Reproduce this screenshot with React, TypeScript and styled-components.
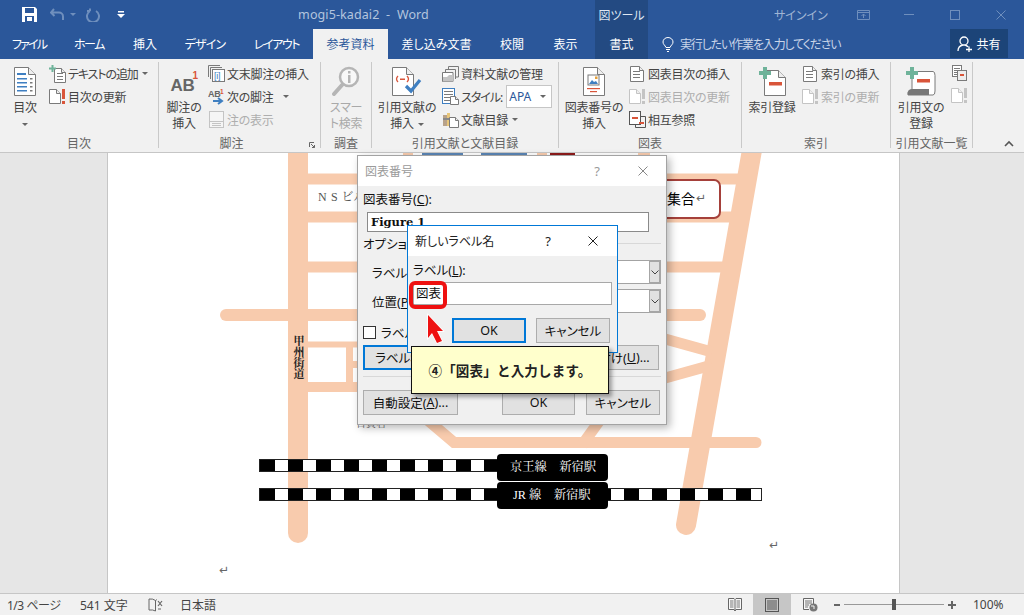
import React from "react";
import styled, { createGlobalStyle } from "styled-components";

const Global = createGlobalStyle`
  html, body { margin: 0; padding: 0; background: #fff; }
  body { font-family: "Noto Sans", "Noto Sans CJK JP", sans-serif; font-size: 12px; font-feature-settings: "palt"; }
  #root { width: 1024px; height: 615px; overflow: hidden; }
  * { box-sizing: border-box; }
`;

const Root = styled.div`position: relative; width: 1024px; height: 615px; overflow: hidden; display: flex; flex-direction: column;`;

/* ---------- title bar ---------- */
const TitleBar = styled.div`height: 29px; background: #2b579a; display: flex; align-items: center; position: relative; flex: none;`;
const Qat = styled.div`display: flex; align-items: center; width: 206px; padding-left: 21px;`;
const QatSlot = styled.div<{ $w: number; $ml?: number }>`width: ${p => p.$w}px; margin-left: ${p => p.$ml ?? 0}px; display: flex; align-items: center; justify-content: center;`;
const DocTitle = styled.div`width: 315px; margin-right: 74px; text-align: center; color: #b4c5de; font-size: 12.5px; white-space: pre; letter-spacing: .1px; font-family: "Noto Sans", sans-serif;`;
const ToolTitle = styled.div`width: 53px; height: 29px; background: #234a82; color: #dfe7f2; display: flex; align-items: center; justify-content: center; font-size: 12px;`;
const SignIn = styled.div`margin-left: 126px; width: 46px; color: #a0b5d4; font-size: 12px; white-space: nowrap;`;
const WinBtns = styled.div`display: flex; margin-left: 20px;`;
const WinBtn = styled.div`width: 46px; height: 29px; display: flex; align-items: center; justify-content: center;`;

/* ---------- tabs ---------- */
const TabBar = styled.div`height: 30px; background: #2b579a; display: flex; align-items: stretch; position: relative; flex: none;`;
const Tab = styled.div<{ $x: number; $active?: boolean; $tool?: boolean; $sp?: number }>`
  width: ${p => p.$x}px; display: flex; align-items: center; justify-content: center; white-space: nowrap;
  margin-left: ${p => (p.$tool ? 3 : 0)}px;
  letter-spacing: ${p => p.$sp ?? 0}px;
  color: ${p => (p.$active ? "#2b579a" : "#fff")};
  background: ${p => (p.$active ? "#f1f1f1" : p.$tool ? "#234a82" : "transparent")};
`;
const Tell = styled.div`display: flex; align-items: center; margin-left: 14px; width: 288px; gap: 6px; color: #c8d4e8; letter-spacing: -1.15px; white-space: nowrap;`;
const Share = styled.div`width: 58px; margin: 0 0 1px 0; background: #1c4478; color: #fff; display: flex; align-items: center; justify-content: center; gap: 3px;`;

/* ---------- ribbon ---------- */
const Ribbon = styled.div`height: 94px; background: #f1f1f1; border-bottom: 1px solid #c6c6c6; display: flex; position: relative; flex: none; color: #444; letter-spacing: -.25px;`;
const Group = styled.div<{ $w: number }>`width: ${p => p.$w}px; display: flex; flex-direction: column; flex: none;`;
const GroupBody = styled.div<{ $pl: number; $gap: number }>`height: 76px; display: flex; padding-left: ${p => p.$pl}px; gap: ${p => p.$gap}px;`;
const GroupLabel = styled.div<{ $pr?: number }>`height: 17px; line-height: 17px; text-align: center; color: #666; white-space: nowrap; position: relative; letter-spacing: 0; padding-right: ${p => p.$pr ?? 0}px;`;
const Launcher = styled.svg`position: absolute; right: 5px; top: 7px; width: 6px; height: 6px;`;
const Sep = styled.div`width: 1px; height: 86px; margin-top: 3px; background: #c9c9c9; flex: none;`;
const Big = styled.div<{ $w: number; $off?: boolean }>`width: ${p => p.$w}px; padding-top: 8px; display: flex; flex-direction: column; align-items: center; color: ${p => (p.$off ? "#a9a9a9" : "#444")}; flex: none;`;
const BigIcon = styled.div`height: 28px; margin-bottom: 5px; display: flex; align-items: center; justify-content: center;`;
const BigLine = styled.div`height: 16px; line-height: 16px; white-space: nowrap; display: flex; align-items: center; gap: 4px;`;
const SmallCol = styled.div<{ $top?: number }>`padding-top: ${p => p.$top ?? 3}px; display: flex; flex-direction: column;`;
const SmallRow = styled.div<{ $off?: boolean; $sp?: number }>`height: 23px; display: flex; align-items: center; white-space: nowrap; color: ${p => (p.$off ? "#aeaeae" : "#444")}; letter-spacing: ${p => p.$sp ?? -0.25}px;`;
const Slot = styled.div`width: 17px; margin-right: 2px; display: flex; align-items: center; justify-content: center; flex: none;`;
const Caret = styled.span<{ $ml?: number }>`display: inline-block; width: 0; height: 0; margin-left: ${p => p.$ml ?? 0}px; border: 3px solid transparent; border-top: 3.5px solid #666; border-bottom: 0;`;
const StyleSelect = styled.div`width: 46px; height: 23px; margin-left: 4px; background: #fff; border: 1px solid #c6c6c6; display: flex; align-items: center; justify-content: space-between; padding: 0 5px 0 2px; color: #2b579a; letter-spacing: 0;`;
const Collapse = styled.div`position: absolute; right: 10px; bottom: 4px; width: 10px; height: 8px;`;

/* ---------- document ---------- */
const DocArea = styled.div`flex: 1; background: #e6e6e6; padding-left: 107px; min-height: 0;`;
const Page = styled.div`position: relative; width: 793px; height: 100%; background: #fff; border-left: 1px solid #c6c6c6; border-right: 1px solid #c6c6c6; overflow: hidden;`;
const MapArt = styled.svg`position: absolute; left: 0; top: 0; width: 791px; height: 440px;`;
const MapLabel = styled.div<{ $x: number; $y: number; $c?: string; $s?: number; $b?: boolean; $ls?: number }>`
  position: absolute; left: ${p => p.$x - 108}px; top: ${p => p.$y - 153}px; white-space: pre; line-height: 1;
  font-family: "Liberation Serif", "Noto Serif CJK JP", "Noto Sans CJK JP", serif;
  color: ${p => p.$c ?? "#222"}; font-size: ${p => p.$s ?? 12}px; font-weight: ${p => (p.$b ? 700 : 400)}; letter-spacing: ${p => p.$ls ?? 0}px;
`;
const VerticalLabel = styled(MapLabel)`writing-mode: vertical-rl; font-feature-settings: normal;`;
const Callout = styled(MapLabel)`font-family: "Noto Sans CJK JP", sans-serif; color: #000;`;
const Para = styled.div<{ $x: number; $y: number }>`position: absolute; left: ${p => p.$x - 108}px; top: ${p => p.$y - 153}px; color: #666; font-size: 12px; line-height: 1; font-family: "DejaVu Sans", sans-serif;`;

/* ---------- dialogs ---------- */
const Dialog = styled.div`position: absolute; left: 357px; top: 155px; width: 310px; height: 270px; background: #f0f0f0; border: 1px solid #a3a3a3; box-shadow: 3px 3px 8px rgba(0,0,0,.28); color: #111; display: flex; flex-direction: column; font-size: 12.5px;`;
const DlgTitle = styled.div<{ $h: number; $c: string }>`height: ${p => p.$h}px; background: #fff; display: flex; align-items: center; padding-left: 7px; color: ${p => p.$c}; flex: none; font-size: 12px;`;
const DlgName = styled.div`flex: 1; white-space: nowrap;`;
const Help = styled.div<{ $c: string; $w: number }>`width: ${p => p.$w}px; text-align: center; color: ${p => p.$c}; font-size: 13px; font-family: "Noto Sans", sans-serif;`;
const CloseSlot = styled.div<{ $w: number }>`width: ${p => p.$w}px; display: flex; justify-content: center; align-items: center;`;
const DlgBody = styled.div`padding: 6px 5px 0 5px; display: flex; flex-direction: column;`;
const Lbl = styled.div`height: 16px; line-height: 16px; white-space: nowrap;`;
const CaptionInput = styled.div`margin: 4px 0 0 4px; width: 282px; height: 20px; background: #fff; border: 1px solid #8a8a8a; font: 700 11.5px/18px "DejaVu Serif", "Liberation Serif", serif; padding-left: 3px; color: #111;`;
const OptRow = styled.div`margin-top: 3px; height: 16px; display: flex; align-items: center; gap: 6px;`;
const Rule = styled.div`flex: 1; height: 1px; background: #d8d8d8;`;
const SelRow = styled.div<{ $mt: number }>`margin-top: ${p => p.$mt}px; height: 24px; display: flex; align-items: center; padding-left: 9px;`;
const SelName = styled.div`width: 48px; white-space: nowrap;`;
const SelField = styled.div`flex: 1; height: 24px; background: #fff; border: 1px solid #a3a3a3; display: flex; justify-content: flex-end;`;
const SelArrow = styled.div`width: 12px; margin: -1px -1px -1px 0; background: #e1e1e1; border: 2px solid #a6a6a6; border-left-width: 1px; display: flex; align-items: center; justify-content: center;`;
const CheckRow = styled.div`margin-top: 12px; height: 14px; display: flex; align-items: center; gap: 5px; white-space: nowrap;`;
const CheckBox = styled.div`width: 13px; height: 13px; background: #fff; border: 1px solid #333;`;
const BtnRow = styled.div<{ $mt: number }>`margin-top: ${p => p.$mt}px; display: flex;`;
const Btn = styled.div<{ $w: number; $h?: number; $primary?: boolean; $ml?: number }>`
  width: ${p => p.$w}px; height: ${p => p.$h ?? 25}px; margin-left: ${p => p.$ml ?? 0}px; flex: none;
  background: #e1e1e1; border: ${p => (p.$primary ? "2px solid #0078d7" : "1px solid #adadad")};
  display: flex; align-items: center; justify-content: center; white-space: nowrap; color: #111;
`;
const Divider = styled.div`margin-top: 6px; height: 1px; background: #d8d8d8;`;
const SubDialog = styled.div`position: absolute; left: 407px; top: 225px; width: 211px; height: 128px; background: #f0f0f0; border: 1px solid #0078d7; color: #111; display: flex; flex-direction: column; font-size: 12.5px;`;
const SubBody = styled.div`padding: 7px 6px 0 5px; display: flex; flex-direction: column;`;
const NameInput = styled.div`margin-top: 3px; width: 199px; height: 23px; background: #fff; border: 1px solid #a8a8a8; padding-left: 2px; line-height: 21px; font-size: 12.5px; color: #111;`;
const SubBtns = styled.div`margin-top: 13px; margin-left: 39px; display: flex; gap: 10px;`;
const Marker = styled.div`position: absolute; left: 409px; top: 281px; width: 38px; height: 28px; border: 4px solid #ee1111; border-radius: 6px;`;
const Pointer = styled.svg`position: absolute; left: 420px; top: 310px; width: 30px; height: 40px;`;
const Note = styled.div`position: absolute; left: 411px; top: 346px; width: 198px; height: 48px; background: #ffffcc; border: 1px solid #111; box-shadow: 3px 3px 4px rgba(0,0,0,.35); display: flex; align-items: center; justify-content: center; font-weight: 700; font-size: 13.5px; letter-spacing: .2px; color: #222; white-space: nowrap; font-feature-settings: normal;`;

/* ---------- status bar ---------- */
const Status = styled.div`height: 22px; flex: none; background: #f1f1f1; border-top: 1px solid #c6c6c6; display: flex; align-items: center; color: #444; font-size: 12px; position: relative;`;
const StatusText = styled.div<{ $w: number; $ml?: number; $sp?: number }>`width: ${p => p.$w}px; margin-left: ${p => p.$ml ?? 0}px; white-space: nowrap; flex: none; letter-spacing: ${p => p.$sp ?? 0}px;`;
const ViewBtn = styled.div<{ $w: number; $active?: boolean; $ml?: number }>`width: ${p => p.$w}px; height: 21px; margin-left: ${p => p.$ml ?? 0}px; display: flex; align-items: center; justify-content: center; background: ${p => (p.$active ? "#c6c6c6" : "transparent")}; flex: none;`;
const ZoomSign = styled.div`width: 6px; height: 2px; margin-left: 5px; background: #666; position: relative; flex: none;`;
const ZoomPlus = styled.div`width: 8px; height: 2px; background: #666; position: relative; flex: none; &::after { content: ""; position: absolute; left: 3px; top: -3px; width: 2px; height: 8px; background: #666; }`;
const Track = styled.div`width: 100px; height: 1px; background: #999; margin: 0 4px; position: relative; flex: none;`;
const Thumb = styled.div`position: absolute; left: 48px; top: -5px; width: 4px; height: 11px; background: #555;`;

/* ---------- icons ---------- */
const G = "#7a7a7a", R = "#d9553a", B = "#3f7fc1", GR = "#6fb39a", LT = "#c4c4c4";
const Svg = ({ w, h, children }: { w: number; h: number; children: React.ReactNode }) => (
  <svg width={w} height={h} viewBox={`0 0 ${w} ${h}`} style={{ display: "block" }}>{children}</svg>
);
const Sheet = ({ x = .5, y = .5, w, h, f = 6, c = G }: { x?: number; y?: number; w: number; h: number; f?: number; c?: string }) => (
  <>
    <path d={`M${x} ${y}H${x + w - f}L${x + w} ${y + f}V${y + h}H${x}Z`} fill="#fff" stroke={c} />
    <path d={`M${x + w - f} ${y}V${y + f}H${x + w}`} fill="#eee" stroke={c} />
  </>
);
const Plus = ({ x, y, s = 9, t = 3 }: { x: number; y: number; s?: number; t?: number }) => (
  <path d={`M${x + (s - t) / 2} ${y}h${t}v${(s - t) / 2}h${(s - t) / 2}v${t}h-${(s - t) / 2}v${(s - t) / 2}h-${t}v-${(s - t) / 2}h-${(s - t) / 2}v-${t}h${(s - t) / 2}Z`} fill={GR} />
);
const Bang = ({ x, c = R }: { x: number; c?: string }) => (
  <><rect x={x} y={1} width={3} height={10} fill={c} /><rect x={x} y={13} width={3} height={3} fill={c} /></>
);
const TocIcon = () => (
  <Svg w={22} h={29}>
    <Sheet w={21} h={28} f={7} />
    <rect x={3} y={6} width={9} height={2} fill={B} />
    {[11, 15, 19, 23].map(y => <g key={y}><rect x={3} y={y} width={10} height={1.5} fill={B} /><rect x={16} y={y} width={2.5} height={1.5} fill={G} /></g>)}
  </Svg>
);
const AddTextIcon = () => (
  <Svg w={17} h={18}>
    <Sheet x={5.5} y={3.5} w={11} h={14} f={4} />
    {[8, 11, 14].map(y => <rect key={y} x={8} y={y} width={6} height={1} fill={G} />)}
    <Plus x={0} y={0} s={7} t={2} />
  </Svg>
);
const UpdateIcon = ({ c = G, bang = R }: { c?: string; bang?: string }) => (
  <Svg w={17} h={17}><Sheet y={1.5} w={11} h={14} f={4} c={c} /><Bang x={13} c={bang} /></Svg>
);
const FootIcon = () => (
  <Svg w={32} h={28}>
    <text x={2.500} y={24} fontFamily="Liberation Sans" fontWeight={700} fontSize={17} fill="#666">AB</text>
    <text x={24.500} y={12} fontFamily="Liberation Sans" fontWeight={700} fontSize={10} fill={R}>1</text>
  </Svg>
);
const EndIcon = () => (
  <Svg w={17} h={17}>
    <path d="M.5 12V.5H12M2.5 14V2.5H14" fill="none" stroke={G} />
    <rect x={4.5} y={4.5} width={12} height={12} fill="#fff" stroke={G} />
    <text x={6} y={14} fontFamily="Liberation Sans" fontSize={9} fill={B}>[i]</text>
  </Svg>
);
const NextIcon = () => (
  <Svg w={17} h={17}>
    <text x={0} y={9} fontFamily="Liberation Sans" fontWeight={700} fontSize={9} fill="#666">AB</text>
    <text x={12} y={6} fontFamily="Liberation Sans" fontWeight={700} fontSize={6.5} fill={R}>1</text>
    <path d="M5 13h8M10 10l4 3-4 3" fill="none" stroke={B} strokeWidth={2} />
  </Svg>
);
const ShowIcon = () => (
  <Svg w={17} h={17}>
    <rect x={1.5} y={.5} width={14} height={16} fill="#f5f5f5" stroke={LT} />
    <rect x={2} y={10} width={13} height={1} fill={LT} /><rect x={4} y={12} width={9} height={1} fill={LT} /><rect x={4} y={14} width={9} height={1} fill={LT} />
  </Svg>
);
const LensIcon = () => (
  <Svg w={28} h={30}>
    <circle cx={17} cy={11} r={9} fill="#f8f8f8" stroke="#b5b5b5" strokeWidth={2.5} />
    <path d="M10 19L2 28" stroke="#b5b5b5" strokeWidth={4} strokeLinecap="round" />
    <rect x={16} y={5} width={2.5} height={2.5} fill="#b5b5b5" /><rect x={16} y={9} width={2.5} height={8} fill="#b5b5b5" />
  </Svg>
);
const CiteIcon = () => (
  <Svg w={30} h={29}>
    <Sheet w={21} h={28} f={7} />
    <path d="M6 9q-3 3 0 6M15 9q3 3 0 6" fill="none" stroke={R} strokeWidth={1.3} />
    <rect x={8} y={11.5} width={5} height={1.5} fill={R} />
    <path d="M14 19l5 5L28 13" fill="none" stroke={B} strokeWidth={3.2} />
  </Svg>
);
const ManageIcon = () => (
  <Svg w={17} h={16}>
    <path d="M6.5 3V.5H16.5V11H14M3.5 6V3.5H13.5V13" fill="none" stroke={G} />
    <path d="M.5 6.5H11L11 15.5H.5Z" fill="#fff" stroke={G} />
    <path d="M1 11h4l2-2h4V15.5H1Z" fill={LT} />
  </Svg>
);
const StyleIcon = () => (
  <Svg w={17} h={17}>
    <rect x={.5} y={.5} width={12} height={15} fill="#fff" stroke={B} />
    {[3, 6, 9, 12].map(y => <rect key={y} x={2} y={y} width={9} height={1} fill={G} />)}
    <Sheet x={8.5} y={8.5} w={8} h={8} f={3} />
  </Svg>
);
const BiblioIcon = () => (
  <Svg w={17} h={17}>
    <rect x={1} y={4} width={4} height={11} fill="#b8a28a" /><rect x={5} y={2} width={3} height={13} fill="#e8c67a" />
    <rect x={1} y={7} width={7} height={2} fill="#888" />
    <Sheet x={7.5} y={6.5} w={9} h={10} f={3} />
  </Svg>
);
const CaptionIcon = () => (
  <Svg w={22} h={29}>
    <Sheet w={21} h={28} f={7} />
    <rect x={5} y={8} width={11} height={10} fill="#fff" stroke={G} />
    <path d="M6 17l3-4 2 2 2-1 2 3Z" fill={B} /><rect x={12} y={9.5} width={2.5} height={2.5} fill="#e6a13a" />
    <rect x={4} y={21} width={13} height={1.2} fill={R} /><rect x={7} y={24} width={7} height={1.2} fill={R} />
  </Svg>
);
const ListDocIcon = () => (
  <Svg w={15} h={16}>
    <Sheet w={13} h={15} f={4} />
    {[5, 8, 11].map(y => <rect key={y} x={3} y={y} width={7} height={1} fill={G} />)}
  </Svg>
);
const XrefIcon = () => (
  <Svg w={17} h={17}>
    <rect x={.5} y={.5} width={11} height={13} fill="#fff" stroke="#555" />
    <rect x={3} y={6} width={6} height={2} fill={R} />
    <path d="M12 5.5h4.500V16.500H6.500V14" fill="none" stroke="#555" />
    <rect x={10} y={11} width={5} height={2} fill={R} />
  </Svg>
);
const EntryIcon = () => (
  <Svg w={27} h={29}>
    <Sheet x={5.500} y={3.500} w={21} h={25} f={7} />
    <rect x={10} y={15} width={13} height={3.5} fill={R} />
    <Plus x={0} y={0} s={12} t={4} />
  </Svg>
);
const MarkIcon = () => (
  <Svg w={31} h={29}>
    <path d="M6 4.500H27q2 0 2 4V24q0 4 -2 4H2q-1-5 4-5Z" fill="#fff" stroke={G} />
    <path d="M2 28q-1-6 4-6H23v6Z" fill="#777" />
    <rect x={11} y={12} width={13} height={3.500} fill={R} />
    <Plus x={0} y={0} s={12} t={4} />
  </Svg>
);
const TableMiniIcon = () => (
  <Svg w={15} h={16}>
    <rect x={.5} y={.5} width={9} height={11} fill="#fff" stroke={G} />
    {[3, 5, 7, 9].map(y => <rect key={y} x={2} y={y} width={6} height={1} fill={G} />)}
    <rect x={5.500} y={5.500} width={9} height={10} fill="#eee" stroke={G} />
    <rect x={8} y={9} width={4} height={2} fill={R} />
  </Svg>
);
const X = ({ s, c, w = 1 }: { s: number; c: string; w?: number }) => (
  <svg width={s} height={s} viewBox={`0 0 ${s} ${s}`} style={{ display: "block" }}><path d={`M.5 .5L${s - .5} ${s - .5}M${s - .5} .5L.5 ${s - .5}`} stroke={c} strokeWidth={w} /></svg>
);
const Chevron = () => (
  <svg width={8} height={5} viewBox="0 0 8 5" style={{ display: "block" }}><path d="M.5 .5L4 4L7.500 .5" fill="none" stroke="#444" /></svg>
);

/* ---------- map ---------- */
const PEACH = "#f8cbad";
const Rail = ({ y, x2 }: { y: number; x2: number }) => {
  const cells: React.ReactNode[] = [];
  for (let x = 260, i = 0; x < x2; i++) {
    const w = i % 2 ? 13 : 15;
    cells.push(<rect key={x} x={x} y={y} width={Math.min(w, x2 - x)} height={11} fill={i % 2 ? "#fff" : "#000"} />);
    x += w;
  }
  return <g>{cells}<rect x={259.5} y={y - .5} width={x2 - 259} height={12} fill="none" stroke="#222" /></g>;
};
const Road = ({ d, w = 11, cap = "butt" }: { d: string; w?: number; cap?: "butt" | "round" }) => (
  <path d={d} fill="none" stroke={PEACH} strokeWidth={w} strokeLinecap={cap} />
);
const MapDrawing = () => (
  <MapArt viewBox="108 153 791 440">
    <Road d="M298 150V533" w={20} cap="round" />
    <Road d="M752 150L686 525" w={20} cap="round" />
    <Road d="M300 179H745" />
    <Road d="M300 217H738" />
    <Road d="M300 267H730" />
    <Road d="M226 315H700" w={12} cap="round" />
    <Road d="M300 344.500H357" w={6} />
    <Road d="M300 387H357" w={10} />
    <Road d="M349.500 344V388" w={7} />
    <Road d="M353 364.500H358" w={7} />
    <Road d="M640 332L712 352" />
    <Road d="M640 385L712 365" />
    <Road d="M404 400L454 442.500H756" cap="round" />
    <Road d="M582 445L600 420" />
    <rect x={403} y={153} width={10} height={2} fill={PEACH} />
    <rect x={422} y={153} width={41} height={2} fill="#5b86b5" />
    <rect x={481} y={153} width={46} height={2} fill="#5b86b5" />
    <rect x={537} y={153} width={10} height={2} fill={PEACH} />
    <rect x={550} y={153} width={25} height={2} fill="#8e1c1c" />
    <rect x={638} y={153} width={12} height={2} fill={PEACH} />
    <rect x={600} y={180} width={120} height={38} rx={6} fill="#fff" stroke="#a5403a" strokeWidth={2} />
    <Rail y={460} x2={498} />
    <Rail y={489} x2={761} />
    <rect x={497} y={454} width={111} height={27} rx={4} fill="#000" />
    <rect x={497} y={482} width={111} height={27} rx={4} fill="#000" />
  </MapArt>
);

const RibbonDoc = () => (
  <Ribbon>
    <Group $w={158}>
      <GroupBody $pl={6} $gap={5}>
        <Big $w={38}><BigIcon><TocIcon /></BigIcon><BigLine>目次</BigLine><BigLine><Caret /></BigLine></Big>
        <SmallCol>
          <SmallRow $sp={-1.1}><Slot><AddTextIcon /></Slot>テキストの追加<Caret $ml={4} /></SmallRow>
          <SmallRow><Slot><UpdateIcon /></Slot>目次の更新</SmallRow>
        </SmallCol>
      </GroupBody>
      <GroupLabel>目次</GroupLabel>
    </Group>
    <Sep />
    <Group $w={161}>
      <GroupBody $pl={7} $gap={6}>
        <Big $w={36}><BigIcon><FootIcon /></BigIcon><BigLine>脚注の</BigLine><BigLine>挿入</BigLine></Big>
        <SmallCol>
          <SmallRow><Slot><EndIcon /></Slot>文末脚注の挿入</SmallRow>
          <SmallRow><Slot><NextIcon /></Slot>次の脚注<Caret $ml={9} /></SmallRow>
          <SmallRow $off><Slot><ShowIcon /></Slot>注の表示</SmallRow>
        </SmallCol>
      </GroupBody>
      <GroupLabel $pr={16}>
        脚注
        <Launcher viewBox="0 0 6 6"><path d="M.5 5V.5H5M2 2L5.500 5.500M5.500 3V5.500H3" fill="none" stroke="#666" /></Launcher>
      </GroupLabel>
    </Group>
    <Sep />
    <Group $w={50}>
      <GroupBody $pl={5} $gap={0}>
        <Big $w={40} $off><BigIcon><LensIcon /></BigIcon><BigLine>スマー</BigLine><BigLine>ト検索</BigLine></Big>
      </GroupBody>
      <GroupLabel>調査</GroupLabel>
    </Group>
    <Sep />
    <Group $w={186}>
      <GroupBody $pl={4} $gap={4}>
        <Big $w={62}><BigIcon><CiteIcon /></BigIcon><BigLine>引用文献の</BigLine><BigLine>挿入<Caret /></BigLine></Big>
        <SmallCol>
          <SmallRow><Slot><ManageIcon /></Slot>資料文献の管理</SmallRow>
          <SmallRow $sp={-1}><Slot><StyleIcon /></Slot>スタイル:<StyleSelect>APA<Caret /></StyleSelect></SmallRow>
          <SmallRow><Slot><BiblioIcon /></Slot>文献目録<Caret $ml={4} /></SmallRow>
        </SmallCol>
      </GroupBody>
      <GroupLabel>引用文献と文献目録</GroupLabel>
    </Group>
    <Sep />
    <Group $w={182}>
      <GroupBody $pl={4} $gap={4}>
        <Big $w={62}><BigIcon><CaptionIcon /></BigIcon><BigLine>図表番号の</BigLine><BigLine>挿入</BigLine></Big>
        <SmallCol>
          <SmallRow><Slot><ListDocIcon /></Slot>図表目次の挿入</SmallRow>
          <SmallRow $off><Slot><UpdateIcon c={LT} bang={LT} /></Slot>図表目次の更新</SmallRow>
          <SmallRow><Slot><XrefIcon /></Slot>相互参照</SmallRow>
        </SmallCol>
      </GroupBody>
      <GroupLabel>図表</GroupLabel>
    </Group>
    <Sep />
    <Group $w={148}>
      <GroupBody $pl={4} $gap={4}>
        <Big $w={52}><BigIcon><EntryIcon /></BigIcon><BigLine>索引登録</BigLine></Big>
        <SmallCol>
          <SmallRow><Slot><ListDocIcon /></Slot>索引の挿入</SmallRow>
          <SmallRow $off><Slot><UpdateIcon c={LT} bang={LT} /></Slot>索引の更新</SmallRow>
        </SmallCol>
      </GroupBody>
      <GroupLabel>索引</GroupLabel>
    </Group>
    <Sep />
    <Group $w={81}>
      <GroupBody $pl={5} $gap={5}>
        <Big $w={50}><BigIcon><MarkIcon /></BigIcon><BigLine>引用文の</BigLine><BigLine>登録</BigLine></Big>
        <SmallCol $top={2}>
          <SmallRow><Slot><TableMiniIcon /></Slot></SmallRow>
          <SmallRow><Slot><UpdateIcon c={LT} bang={LT} /></Slot></SmallRow>
        </SmallCol>
      </GroupBody>
      <GroupLabel>引用文献一覧</GroupLabel>
    </Group>
    <Sep />
    <Collapse>
      <svg width={10} height={8} viewBox="0 0 10 8" style={{ display: "block" }}><path d="M1 6L5 2L9 6" fill="none" stroke="#555" strokeWidth={1.6} /></svg>
    </Collapse>
  </Ribbon>
);

export default function App() {
  return (
    <Root>
      <Global />
      <TitleBar>
        <Qat>
          <QatSlot $w={16}>
            <svg width={15} height={15} viewBox="0 0 15 15" style={{ display: "block" }}>
              <path d="M0 0H13L15 2V15H0Z" fill="#fff" /><rect x={3} y={1} width={9} height={5} fill="#2b579a" /><rect x={3} y={9} width={9} height={6} fill="#2b579a" /><rect x={5} y={10} width={5} height={4} fill="#fff" />
            </svg>
          </QatSlot>
          <QatSlot $w={26} $ml={7}>
            <svg width={15} height={13} viewBox="0 0 15 13" style={{ display: "block" }}><path d="M4 1L1 4.500L4.500 8M1.500 4.500H9a4 4 0 0 1 4 4V12" fill="none" stroke="#6f8fbd" strokeWidth={2} /></svg>
          </QatSlot>
          <QatSlot $w={6}><Caret style={{ borderTopColor: "#6f8fbd" }} /></QatSlot>
          <QatSlot $w={34}>
            <svg width={14} height={14} viewBox="0 0 14 14" style={{ display: "block" }}><path d="M4 3A6 6 0 1 0 10 3M4 3V.5M4 3H1" fill="none" stroke="#6f8fbd" strokeWidth={2} /></svg>
          </QatSlot>
          <QatSlot $w={22}>
            <svg width={8} height={7} viewBox="0 0 8 7" style={{ display: "block" }}><rect x={1} y={0} width={6} height={1.500} fill="#fff" /><path d="M0 3H8L4 7Z" fill="#fff" /></svg>
          </QatSlot>
        </Qat>
        <DocTitle>{"mogi5-kadai2  -  Word"}</DocTitle>
        <ToolTitle>図ツール</ToolTitle>
        <SignIn>サインイン</SignIn>
        <WinBtns>
          <WinBtn>
            <svg width={13} height={10} viewBox="0 0 13 10" style={{ display: "block" }}><path d="M.5 .5H12.500V9.500H.5ZM.5 2.500H12.500M6.500 8V4M4.500 6L6.500 4L8.500 6" fill="none" stroke="#6f8fbd" /></svg>
          </WinBtn>
          <WinBtn><svg width={10} height={1} style={{ display: "block" }}><rect width={10} height={1} fill="#6f8fbd" /></svg></WinBtn>
          <WinBtn><svg width={10} height={10} style={{ display: "block" }}><rect x={.5} y={.5} width={9} height={9} fill="none" stroke="#6f8fbd" /></svg></WinBtn>
          <WinBtn><X s={10} c="#6f8fbd" /></WinBtn>
        </WinBtns>
      </TitleBar>
      <TabBar>
        <Tab $x={58} $sp={-1.8}>ファイル</Tab>
        <Tab $x={62} $sp={-1.5}>ホーム</Tab>
        <Tab $x={50}>挿入</Tab>
        <Tab $x={70} $sp={-.8}>デザイン</Tab>
        <Tab $x={73} $sp={-1.4}>レイアウト</Tab>
        <Tab $x={75} $active>参考資料</Tab>
        <Tab $x={97}>差し込み文書</Tab>
        <Tab $x={54}>校閲</Tab>
        <Tab $x={53}>表示</Tab>
        <Tab $x={53} $tool>書式</Tab>
        <Tell>
          <svg width={12} height={15} viewBox="0 0 12 15" style={{ display: "block" }}><path d="M4 10.500C3 8 1 7.500 1 5a5 4.500 0 0 1 10 0c0 2.500-2 3-3 5.500ZM4 12.500H8M5 14.500H7" fill="none" stroke="#fff" /></svg>
          実行したい作業を入力してください
        </Tell>
        <Share>
          <svg width={16} height={16} viewBox="0 0 16 16" style={{ display: "block" }}><path d="M7 1a4 4 0 0 1 0 8a4 4 0 0 1 0-8ZM1 15q0-5 5-6M8 9q2 .5 3 2M9 13.500h6M12 10.500v6" fill="none" stroke="#fff" strokeWidth={1.300} /></svg>
          共有
        </Share>
      </TabBar>
      <RibbonDoc />
      <DocArea>
        <Page>
          <MapDrawing />
          <MapLabel $x={318} $y={191} $c="#555" $s={12} $ls={.7}>N S ビル</MapLabel>
          <VerticalLabel $x={292} $y={335} $s={11} $b>甲州街道</VerticalLabel>
          <Callout $x={667} $y={191} $s={14}>集合</Callout>
          <Para $x={696} $y={192}>↵</Para>
          <MapLabel $x={510} $y={461} $c="#fff" $s={12.3}>{"京王線　新宿駅"}</MapLabel>
          <MapLabel $x={513} $y={489} $c="#fff" $s={12.3}>{"JR 線　新宿駅"}</MapLabel>
          <MapLabel $x={356} $y={419} $c="#666" $s={10}>日貴君</MapLabel>
          <Para $x={769} $y={539}>↵</Para>
          <Para $x={219} $y={564}>↵</Para>
        </Page>
      </DocArea>
      <Status>
        <StatusText $w={73} $ml={7} $sp={-.5}>1/3 ページ</StatusText>
        <StatusText $w={68}>541 文字</StatusText>
        <StatusText $w={32}>
          <svg width={15} height={14} viewBox="0 0 15 14" style={{ display: "block" }}><path d="M7.500 2.500Q5 .5 1 1V12Q5 11.500 7.500 13V2.500Q8.500 1.800 9 1.500" fill="none" stroke="#666" /><path d="M10 3l4 5M14 3l-4 5" stroke="#666" strokeWidth={1.200} /><path d="M10 11h3" stroke="#666" /></svg>
        </StatusText>
        <StatusText $w={544}>日本語</StatusText>
        <ViewBtn $w={21}>
          <svg width={14} height={14} viewBox="0 0 14 14" style={{ display: "block" }}><path d="M.5 .5H6L7 1.500L8 .5H13.500V11.500H8L7 13L6 11.500H.5ZM7 1.500V13" fill="#f8f8f8" stroke="#666" /><path d="M2 3H5.500M2 5H5.500M2 7H5.500M2 9H5.500M8.500 3H12M8.500 5H12M8.500 7H12M8.500 9H12" stroke="#777" /></svg>
        </ViewBtn>
        <ViewBtn $w={38} $active $ml={8}>
          <svg width={14} height={14} viewBox="0 0 14 14" style={{ display: "block" }}><rect x={.5} y={.5} width={13} height={13} fill="none" stroke="#555" /><path d="M2 3H12M2 5H12M2 7H12M2 9H12M2 11H12" stroke="#555" /></svg>
        </ViewBtn>
        <ViewBtn $w={38}>
          <svg width={15} height={14} viewBox="0 0 15 14" style={{ display: "block" }}><path d="M.5 .5H10.500V6M6 11.500H.5V.5" fill="#f8f8f8" stroke="#666" /><path d="M2 3H9M2 5H9M2 7H6M2 9H5" stroke="#777" /><circle cx={10.500} cy={9.500} r={4} fill="#777" /><path d="M8 8h3v3" stroke="#f1f1f1" fill="none" /></svg>
        </ViewBtn>
        <ZoomSign />
        <Track><Thumb /></Track>
        <ZoomPlus />
        <StatusText $w={34} $ml={17}>100%</StatusText>
      </Status>

      <Dialog>
        <DlgTitle $h={30} $c="#9a9a9a">
          <DlgName>図表番号</DlgName>
          <Help $c="#999" $w={46}>?</Help>
          <CloseSlot $w={46}><X s={10} c="#888" /></CloseSlot>
        </DlgTitle>
        <DlgBody>
          <Lbl>図表番号(<u>C</u>):</Lbl>
          <CaptionInput>Figure 1</CaptionInput>
          <OptRow>オプション<Rule /></OptRow>
          <SelRow $mt={9}><SelName>ラベル(<u>L</u>):</SelName><SelField><SelArrow><Chevron /></SelArrow></SelField></SelRow>
          <SelRow $mt={5}><SelName>位置(<u>P</u>):</SelName><SelField><SelArrow><Chevron /></SelArrow></SelField></SelRow>
          <CheckRow><CheckBox />ラベルを除外する(<u>E</u>)</CheckRow>
          <BtnRow $mt={6}>
            <Btn $w={99} $primary>ラベル名(<u>N</u>)...</Btn>
            <Btn $w={90} $ml={6}>ラベル削除(<u>D</u>)</Btn>
            <Btn $w={95} $ml={6}>番号付け(<u>U</u>)...</Btn>
          </BtnRow>
          <Divider />
          <BtnRow $mt={13}>
            <Btn $w={95}>自動設定(<u>A</u>)...</Btn>
            <Btn $w={73} $ml={44}>OK</Btn>
            <Btn $w={74} $ml={11}>キャンセル</Btn>
          </BtnRow>
        </DlgBody>
      </Dialog>

      <SubDialog>
        <DlgTitle $h={30} $c="#222">
          <DlgName>新しいラベル名</DlgName>
          <Help $c="#222" $w={42}>?</Help>
          <CloseSlot $w={48}><X s={10} c="#222" /></CloseSlot>
        </DlgTitle>
        <SubBody>
          <Lbl>ラベル(<u>L</u>):</Lbl>
          <NameInput>図表</NameInput>
          <SubBtns>
            <Btn $w={74} $primary>OK</Btn>
            <Btn $w={74}>キャンセル</Btn>
          </SubBtns>
        </SubBody>
      </SubDialog>
      <Marker />
      <Pointer viewBox="420 310 30 40">
        <path d="M428 315L443 331L437 331L442 341L437 343L432 333L428 338Z" fill="#ee1111" stroke="#fff" strokeWidth={1.500} paintOrder="stroke" />
      </Pointer>
      <Note>④「図表」と入力します。</Note>
    </Root>
  );
}
